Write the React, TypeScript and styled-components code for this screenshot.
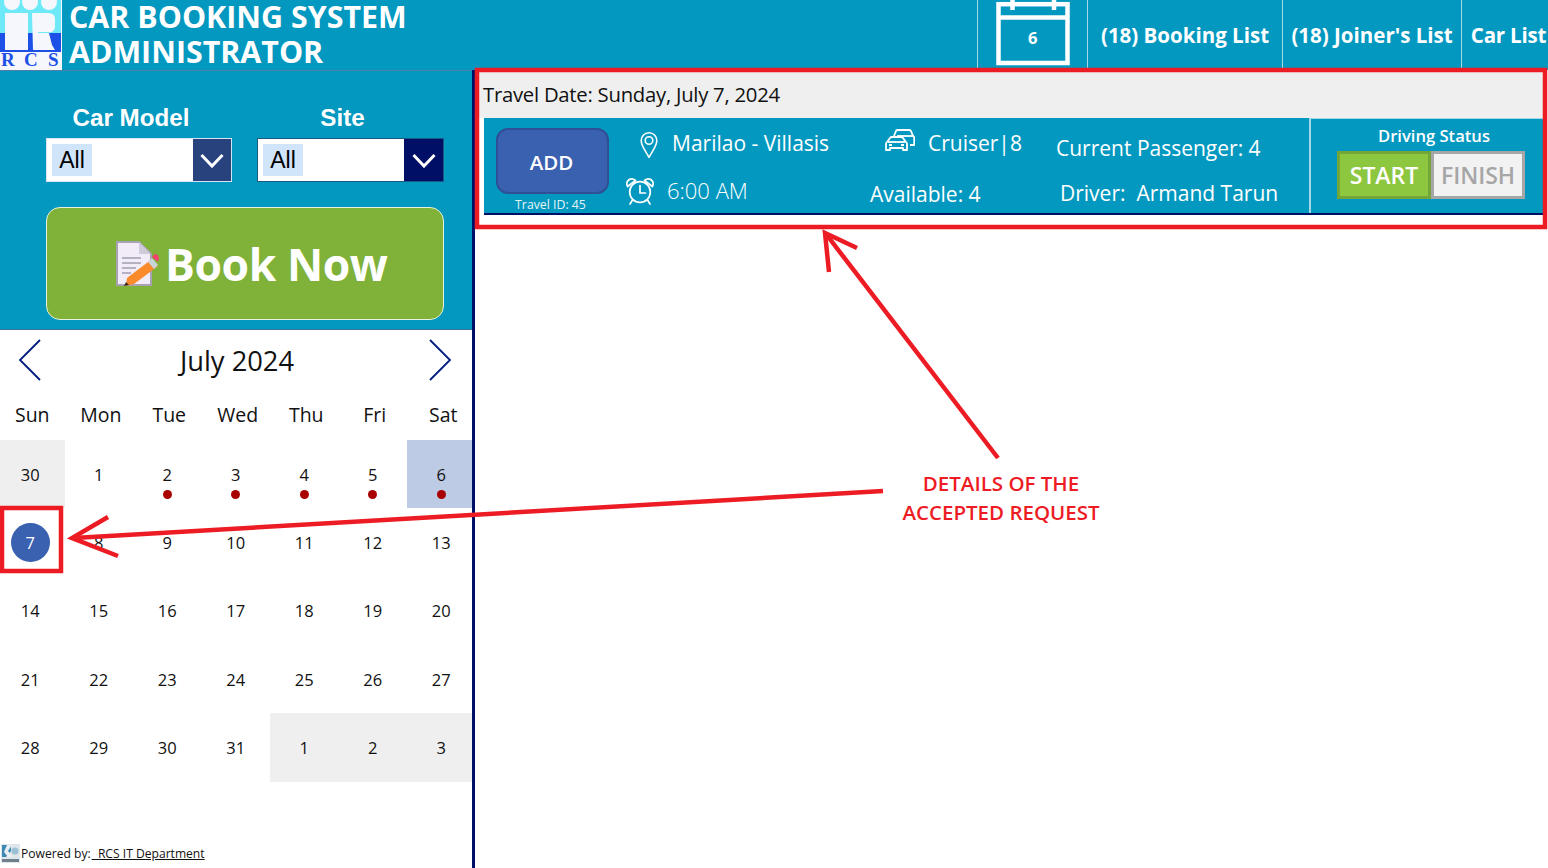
import React from "react";
import styled, { createGlobalStyle } from "styled-components";

const Global = createGlobalStyle`
  html, body { margin: 0; padding: 0; background: #fff; }
  body { font-family: "Open Sans", "Liberation Sans", sans-serif; overflow: hidden; }
  * { box-sizing: border-box; }
`;

const BLUE = "#0398c0";
const NAVY = "#000f66";

const Page = styled.div`
  position: relative;
  width: 1548px;
  height: 868px;
  overflow: hidden;
  display: flex;
  flex-direction: column;
`;

const Header = styled.header`
  height: 70px;
  flex: none;
  background: ${BLUE};
  display: flex;
  align-items: stretch;
  color: #fff;
`;
const Brand = styled.div`
  display: flex;
  flex: 1;
  gap: 7px;
`;
const Title = styled.h1`
  margin: -1px 0 0;
  font-size: 30.4px;
  font-weight: 700;
  line-height: 35px;
  white-space: nowrap;
  height: 71px;
`;
const NavCell = styled.div<{ $w: number; $pad?: number }>`
  width: ${(p) => p.$w}px;
  height: 68px;
  border-left: 1px solid #a5d8e6;
  display: flex;
  align-items: center;
  justify-content: center;
  font-size: 20.5px;
  font-weight: 700;
  white-space: nowrap;
  padding: 2px 0 0 ${(p) => p.$pad || 0}px;
`;
const CarListCell = styled(NavCell)`
  letter-spacing: -0.2px;
`;
const CalWrap = styled(NavCell)`
  position: relative;
  padding: 0;
`;
const CalNum = styled.span`
  position: absolute;
  left: 50px;
  top: 26px;
  font-size: 16.5px;
  font-weight: 700;
`;

const Body = styled.div`
  flex: 1;
  display: flex;
  min-height: 0;
`;
const Side = styled.aside`
  width: 475px;
  flex: none;
  border-right: 3px solid ${NAVY};
  display: flex;
  flex-direction: column;
  overflow: hidden;
  position: relative;
`;
const Filters = styled.section`
  height: 260px;
  flex: none;
  background: ${BLUE};
  border-top: 1px solid #4f7fa8;
  border-bottom: 1px solid #3f6f9f;
  padding: 33px 28px 0 46px;
`;
const FilterRow = styled.div`
  display: grid;
  grid-template-columns: 186px 187px;
  column-gap: 25px;
`;
const Filter = styled.div`
  display: flex;
  flex-direction: column;
`;
const FilterLabel = styled.label<{ $shift: number }>`
  font-family: "Liberation Sans", Arial, sans-serif;
  font-weight: 700;
  font-size: 24.2px;
  line-height: 27px;
  color: #fff;
  text-align: center;
  margin-left: ${(p) => p.$shift}px;
  margin-bottom: 7px;
`;
const Select = styled.div<{ $dark?: boolean }>`
  height: 44px;
  display: flex;
  background: #fff;
  border: 1px solid ${(p) => (p.$dark ? "#1c5a86" : "#d5e6f2")};
`;
const SelectValue = styled.div`
  flex: 1;
  padding: 5px;
`;
const Chip = styled.span`
  display: flex;
  align-items: center;
  justify-content: center;
  width: 40px;
  height: 32px;
  background: #d0e4fa;
  font-family: "Liberation Sans", Arial, sans-serif;
  font-size: 23px;
  color: #000;
`;
const SelectBtn = styled.div<{ $dark?: boolean }>`
  width: ${(p) => (p.$dark ? 39 : 38)}px;
  background: ${(p) => (p.$dark ? NAVY : "#27427c")};
  display: flex;
  align-items: center;
  justify-content: center;
`;
const BookNow = styled.button`
  display: flex;
  align-items: center;
  gap: 6px;
  width: 398px;
  height: 113px;
  margin-top: 25px;
  padding: 0 0 0 68px;
  background: #80b139;
  border: 1px solid #e8f2dc;
  border-radius: 14px;
  color: #fff;
  font-family: "Open Sans", sans-serif;
  font-size: 44.5px;
  font-weight: 700;
  letter-spacing: -0.45px;
`;

const CalHead = styled.div`
  height: 64px;
  flex: none;
  display: flex;
  align-items: center;
  justify-content: space-between;
  padding: 0 20px 4px 18px;
  color: #111;
  font-size: 27.3px;
`;
const Month = styled.span`
  margin: 0 0 0 4px;
`;
const WeekRow = styled.div`
  display: grid;
  grid-template-columns: repeat(7, 68.5px);
  height: 46px;
  margin-left: -2px;
  align-items: center;
  font-size: 19.5px;
  color: #111;
  text-align: center;
  padding-bottom: 6px;
`;
const DayGrid = styled.div`
  display: grid;
  grid-template-columns: repeat(7, 68.5px);
  grid-auto-rows: 68.35px;
  margin-left: -4px;
`;
const Day = styled.div<{ $bg?: string }>`
  position: relative;
  background: ${(p) => p.$bg || "transparent"};
  display: flex;
  align-items: center;
  justify-content: center;
  font-size: 16.5px;
  color: #111;
`;
const Today = styled.span`
  width: 39px;
  height: 39px;
  border-radius: 50%;
  background: #3a60b0;
  color: #fff;
  display: flex;
  align-items: center;
  justify-content: center;
`;
const Dot = styled.i`
  position: absolute;
  left: 50%;
  top: 50px;
  width: 9px;
  height: 9px;
  margin-left: -4.5px;
  border-radius: 50%;
  background: #a80000;
`;
const Footer = styled.footer`
  margin-top: auto;
  height: 24px;
  display: flex;
  align-items: center;
  gap: 1px;
  padding: 0 0 5px 1px;
  font-size: 12.1px;
  color: #111;
  white-space: pre;
`;
const FootLink = styled.span`
  text-decoration: underline;
`;

const Main = styled.main`
  flex: 1;
  min-width: 0;
  padding: 0 5px 0 1px;
`;
const DateBar = styled.div`
  height: 48px;
  background: #efefef;
  padding: 10px 0 0 7px;
  font-size: 20.3px;
  letter-spacing: -0.25px;
  line-height: 28px;
  color: #111;
`;
const Card = styled.div`
  height: 97px;
  margin-left: 8px;
  background: ${BLUE};
  border-bottom: 2px solid ${NAVY};
  display: flex;
  color: #fff;
`;
const AddCol = styled.div`
  width: 141px;
  flex: none;
  padding: 10px 0 0 12px;
`;
const AddBtn = styled.button`
  width: 113px;
  height: 66px;
  background: #3a60b0;
  border: 2px solid #2f4f96;
  border-radius: 12px;
  color: #fff;
  font-family: "Open Sans", sans-serif;
  font-size: 20.5px;
  font-weight: 600;
  padding: 2px 2px 0 0;
`;
const TravelId = styled.div`
  width: 113px;
  margin-top: 3px;
  text-align: center;
  font-size: 12.3px;
  line-height: 16px;
  color: #e6f5fa;
  margin-left: -2px;
`;
const RouteCol = styled.div`
  width: 245px;
  flex: none;
`;
const IconLine = styled.div<{ $indent: number; $gap: number; $h: number }>`
  display: flex;
  align-items: center;
  height: ${(p) => p.$h}px;
  padding-left: ${(p) => p.$indent}px;
  gap: ${(p) => p.$gap}px;
  font-size: 21px;
  white-space: nowrap;
`;
const LightText = styled.span`
  font-weight: 300;
  font-size: 22px;
`;
const CarCol = styled.div`
  width: 186px;
  flex: none;
`;
const PaxCol = styled.div`
  flex: 1;
  padding-top: 16px;
  font-size: 21px;
  line-height: 28px;
  white-space: pre;
`;
const PaxLine = styled.div<{ $indent: number; $top: number }>`
  margin-left: ${(p) => p.$indent}px;
  margin-top: ${(p) => p.$top}px;
`;
const Status = styled.div`
  width: 234px;
  flex: none;
  border-left: 2px solid #a5d8e6;
  border-top: 1px solid #a5d8e6;
  padding: 7px 0 0 26px;
`;
const StatusTitle = styled.div`
  width: 194px;
  text-align: center;
  font-size: 16.6px;
  font-weight: 600;
  line-height: 20px;
  margin-bottom: 5px;
`;
const StatusBtns = styled.div`
  display: flex;
`;
const StartBtn = styled.button`
  width: 94px;
  height: 48px;
  background: #8dc63f;
  border: 3px solid #73a636;
  color: #fff;
  font-family: "Open Sans", sans-serif;
  font-size: 23px;
  font-weight: 600;
  padding: 0;
`;
const FinishBtn = styled(StartBtn)`
  background: #f2f2f2;
  border-color: #a6a6a6;
  color: #a6a6a6;
`;

const Overlay = styled.svg`
  position: absolute;
  inset: 0;
  pointer-events: none;
`;
const Note = styled.div`
  position: absolute;
  left: 880px;
  top: 469px;
  width: 242px;
  text-align: center;
  color: #ed1c24;
  font-size: 20.5px;
  font-weight: 600;
  line-height: 29px;
`;

const Logo = () => (
  <svg width="62" height="70" viewBox="0 0 62 70">
    <rect width="62" height="70" fill="#f6f7fd" />
    <rect width="61" height="33" fill="#6ee9f7" />
    <rect y="33" width="61" height="19" fill="#1c50e6" />
    <g fill="#f6f7fd">
      <circle cx="12" cy="2" r="8" />
      <circle cx="30" cy="2" r="8" />
      <circle cx="49" cy="2" r="8" />
      <path d="M5 13h23v37H5z" />
      <path d="M32 13h16q7 0 7 6v8q0 4-6 6l3 12 3 5H33z" />
    </g>
    <rect x="28" y="15" width="4" height="18" fill="#6ee9f7" />
    <rect x="28" y="33" width="4" height="17" fill="#1c50e6" />
    <path d="M38 32h11l2 1H38z" fill="#6ee9f7" />
    <g fontFamily="Liberation Serif, serif" fontSize="19" fontWeight="700" fill="#1c50e6">
      <text x="1" y="66">R</text>
      <text x="24" y="66">C</text>
      <text x="48" y="66">S</text>
    </g>
  </svg>
);

const CalendarIcon = () => (
  <svg width="74" height="68" viewBox="0 0 74 68" fill="none" stroke="#fff" strokeWidth="4.5">
    <rect x="2.500" y="4.200" width="69" height="58.800" />
    <path d="M2.500 17.500h69" />
    <path d="M16.500 0v10M58 0v10" />
  </svg>
);

const Chevron = () => (
  <svg width="24" height="15" viewBox="0 0 24 15" fill="none" stroke="#fff" strokeWidth="3">
    <path d="M1.500 2l10.500 11L22.500 2" />
  </svg>
);

const Arrow = ({ right }: { right?: boolean }) => (
  <svg width="24" height="42" viewBox="0 0 24 42" fill="none" stroke="#001a80" strokeWidth="1.8">
    <path d={right ? "M2 1l20 20L2 41" : "M22 1L2 21l20 20"} />
  </svg>
);

const DocIcon = () => (
  <svg width="44" height="46" viewBox="0 0 44 46">
    <path d="M2 1h22l12 12v31H2z" fill="#f1ecf7" stroke="#a9a2b5" strokeWidth="2" />
    <path d="M24 1v12h12z" fill="#cfcbd8" />
    <path d="M7 17h19M7 22h19M7 27h14M7 32h9" stroke="#a39db0" strokeWidth="1.600" />
    <path d="M12 37l25-19 6 7-24 18-8 2z" fill="#fb8a2b" />
    <path d="M33 21l4-4 6 7-4 4z" fill="#c7d5d5" />
    <path d="M37 16l3-3q3 0 4 4l-1 4z" fill="#f3406e" />
    <path d="M9 45l2-4 3 3z" fill="#3a2d20" />
  </svg>
);

const PinIcon = () => (
  <svg width="18" height="30" viewBox="0 0 18 30" fill="none" stroke="#fff" strokeWidth="1.600">
    <path d="M9 29.500C6 23 1.200 18.500 1.200 12.500a7.800 7.800 0 0 1 15.600 0C16.800 18.500 12 23 9 29.500z" strokeLinejoin="round" />
    <circle cx="9" cy="12.500" r="3.800" />
  </svg>
);

const ClockIcon = () => (
  <svg width="30" height="30" viewBox="0 0 30 30" fill="none" stroke="#fff" strokeWidth="1.700" strokeLinecap="round" strokeLinejoin="round">
    <circle cx="15" cy="17" r="10.300" />
    <path d="M2.500 11.500C0 5.500 6 1.500 10.500 5.500zM27.500 11.500C30 5.500 24 1.500 19.500 5.500z" />
    <path d="M7.500 25l-2.500 4M22.500 25l2.500 4" />
    <path d="M15 10.500V18h5.500" />
  </svg>
);

const CarsIcon = () => (
  <svg width="30" height="30" viewBox="0 0 30 30" fill="none" stroke="#fff" strokeWidth="1.800" strokeLinejoin="round">
    <g transform="translate(0 1)">
      <path d="M9 7l2-5q.5-1 2-1h11q1.500 0 2 1l2 5q1.200.5 1.200 2v7H25" />
      <path d="M12 7h17" />
      <path d="M1 21v-6q0-1.500 1.500-2.500L5 9q.5-1 2-1h9q1.500 0 2 1l2.500 3.500Q22 13.500 22 15v6H18v-2H5v2z" fill={BLUE} />
      <path d="M3 13h17" />
      <path d="M4 16h3M16 16h3" strokeWidth="2.200" />
    </g>
  </svg>
);

const FootLogo = () => (
  <svg width="19" height="19" viewBox="0 0 19 19">
    <rect width="19" height="19" fill="#dfe6ea" />
    <path d="M1 1h9v6l-5 6H1z" fill="#3d89b5" />
    <path d="M6 1l5 0-4 6 5 6H7L3 8z" fill="#e8eef2" />
    <circle cx="14" cy="7" r="3.500" fill="#9cc0d4" />
    <rect x="1" y="15" width="17" height="3" fill="#6f7f8c" />
  </svg>
);

const weekdays = ["Sun", "Mon", "Tue", "Wed", "Thu", "Fri", "Sat"];
type D = { n: number; bg?: string; dot?: boolean; today?: boolean };
const days: D[] = [
  { n: 30, bg: "#efefef" }, { n: 1 }, { n: 2, dot: true }, { n: 3, dot: true }, { n: 4, dot: true }, { n: 5, dot: true },
  { n: 6, dot: true, bg: "#bdcbe5" },
  { n: 7, today: true },
  ...Array.from({ length: 24 }, (_, i) => ({ n: i + 8 })),
  { n: 1, bg: "#efefef" }, { n: 2, bg: "#efefef" }, { n: 3, bg: "#efefef" },
];

export default function App() {
  return (
    <Page>
      <Global />
      <Header>
        <Brand>
          <Logo />
          <Title>
            CAR BOOKING SYSTEM
            <br />
            ADMINISTRATOR
          </Title>
        </Brand>
        <CalWrap $w={110}>
          <CalendarIcon />
          <CalNum>6</CalNum>
        </CalWrap>
        <NavCell $w={195}>(18) Booking List</NavCell>
        <NavCell $w={179}>(18) Joiner's List</NavCell>
        <CarListCell $w={87} $pad={7}>Car List</CarListCell>
      </Header>
      <Body>
        <Side>
          <Filters>
            <FilterRow>
              <Filter>
                <FilterLabel $shift={-16}>Car Model</FilterLabel>
                <Select>
                  <SelectValue><Chip>All</Chip></SelectValue>
                  <SelectBtn><Chevron /></SelectBtn>
                </Select>
              </Filter>
              <Filter>
                <FilterLabel $shift={-16}>Site</FilterLabel>
                <Select $dark>
                  <SelectValue><Chip>All</Chip></SelectValue>
                  <SelectBtn $dark><Chevron /></SelectBtn>
                </Select>
              </Filter>
            </FilterRow>
            <BookNow>
              <DocIcon />
              Book Now
            </BookNow>
          </Filters>
          <CalHead>
            <Arrow />
            <Month>July 2024</Month>
            <Arrow right />
          </CalHead>
          <WeekRow>
            {weekdays.map((w) => (
              <span key={w}>{w}</span>
            ))}
          </WeekRow>
          <DayGrid>
            {days.map((d, i) => (
              <Day key={i} $bg={d.bg}>
                {d.today ? <Today>{d.n}</Today> : d.n}
                {d.dot && <Dot />}
              </Day>
            ))}
          </DayGrid>
          <Footer>
            <FootLogo />
            Powered by:<FootLink>  RCS IT Department</FootLink>
          </Footer>
        </Side>
        <Main>
          <DateBar>Travel Date: Sunday, July 7, 2024</DateBar>
          <Card>
            <AddCol>
              <AddBtn>ADD</AddBtn>
              <TravelId>Travel ID: 45</TravelId>
            </AddCol>
            <RouteCol>
              <IconLine $indent={15} $gap={14} $h={50}>
                <PinIcon />
                Marilao - Villasis
              </IconLine>
              <IconLine $indent={0} $gap={12} $h={44}>
                <ClockIcon />
                <LightText>6:00 AM</LightText>
              </IconLine>
            </RouteCol>
            <CarCol>
              <IconLine $indent={15} $gap={13} $h={50}>
                <CarsIcon />
                Cruiser|8
              </IconLine>
              <IconLine $indent={0} $gap={0} $h={52}>Available: 4</IconLine>
            </CarCol>
            <PaxCol>
              <PaxLine $indent={0} $top={0}>Current Passenger: 4</PaxLine>
              <PaxLine $indent={4} $top={17}>Driver:  Armand Tarun</PaxLine>
            </PaxCol>
            <Status>
              <StatusTitle>Driving Status</StatusTitle>
              <StatusBtns>
                <StartBtn>START</StartBtn>
                <FinishBtn>FINISH</FinishBtn>
              </StatusBtns>
            </Status>
          </Card>
        </Main>
      </Body>

      <Overlay width="1548" height="868" viewBox="0 0 1548 868" fill="none" stroke="#ed1c24">
        <rect x="477" y="70" width="1068" height="157" strokeWidth="4.500" />
        <rect x="2" y="508" width="59" height="63" strokeWidth="4.500" />
        <path d="M883 491L74 538" strokeWidth="4.500" />
        <path d="M108 517L72 538l46 18" strokeWidth="4.500" />
        <path d="M998 458L826 234" strokeWidth="4.500" />
        <path d="M829 272L825 233l32 15" strokeWidth="4.500" />
      </Overlay>
      <Note>
        DETAILS OF THE
        <br />
        ACCEPTED REQUEST
      </Note>
    </Page>
  );
}
